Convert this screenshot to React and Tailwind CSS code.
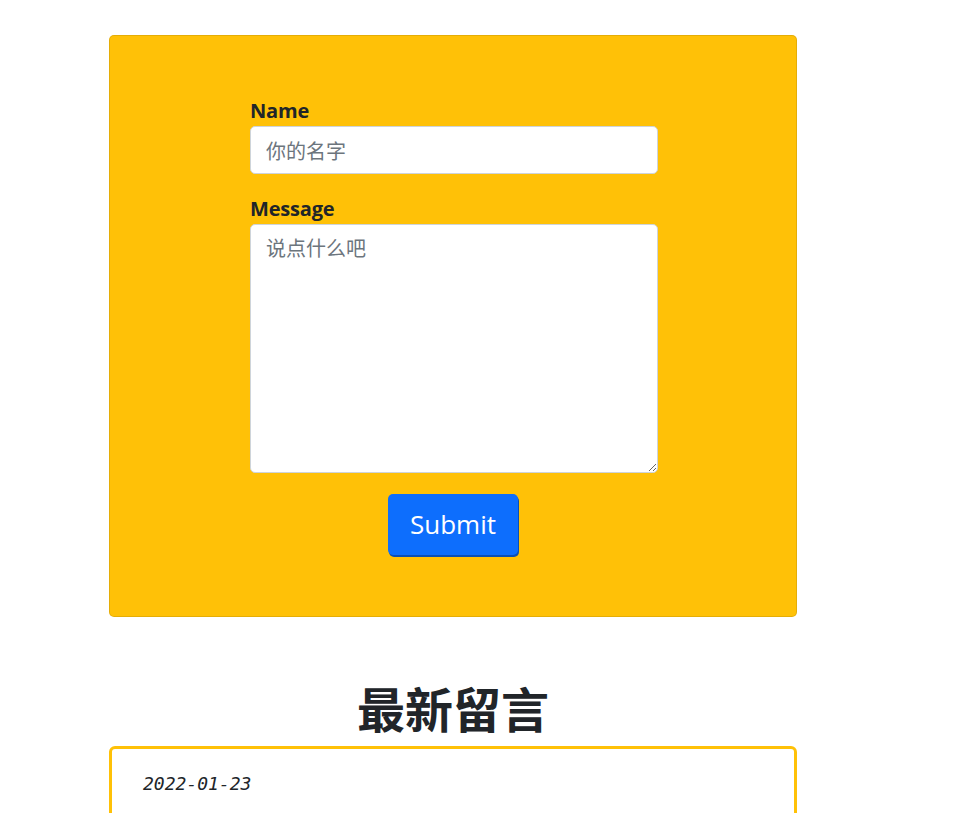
import React from 'react';

const App = () => {
  return (
    <div className="min-h-screen bg-white pt-[35px] pl-[109px] text-[#212529] [font-family:'Noto_Sans','Noto_Sans_CJK_SC',sans-serif]">
      <div className="w-[688px]">
        <div className="h-[582px] bg-[#ffc107] border border-black/10 rounded-[5px] pt-[60px]">
          <form className="w-[408px] ml-[140px] flex flex-col" onSubmit={(e) => e.preventDefault()}>
            <label className="text-[20px] leading-[30px] font-bold [font-family:'Open_Sans','Noto_Sans',sans-serif] tracking-[-0.2px]">
              Name
            </label>
            <input
              type="text"
              placeholder="你的名字"
              className="h-[48px] w-full bg-white border border-[#ced4da] rounded-[5px] px-[15px] text-[20px] placeholder:text-[#6c757d] outline-none [font-family:'Noto_Sans_CJK_SC',sans-serif]"
            />
            <label className="mt-5 text-[20px] leading-[30px] font-bold [font-family:'Open_Sans','Noto_Sans',sans-serif] tracking-[-0.2px]">
              Message
            </label>
            <textarea
              placeholder="说点什么吧"
              className="h-[249px] w-full bg-white border border-[#ced4da] rounded-[5px] px-[15px] py-[8px] text-[20px] leading-[30px] placeholder:text-[#6c757d] outline-none [font-family:'Noto_Sans_CJK_SC',sans-serif]"
            />
            <div className="flex justify-center mt-[21px] pr-[2px]">
              <button
                type="submit"
                className="w-[130px] h-[61px] bg-[#0d6efd] text-white text-[26px] rounded-[5px] shadow-[1px_2px_0_#0a4fb5] [font-family:'Open_Sans','Noto_Sans',sans-serif]"
              >
                Submit
              </button>
            </div>
          </form>
        </div>

        <h2 className="mt-[61px] mb-[10px] text-center text-[48px] leading-[58px] font-bold [font-family:'Noto_Sans_CJK_SC',sans-serif]">
          最新留言
        </h2>

        <div className="h-[200px] border-[3px] border-[#ffc107] rounded-[6px] pt-[23px] pl-[31px]">
          <p className="italic text-[18px] leading-[24px] text-[#212529] [font-family:'DejaVu_Sans_Mono','Liberation_Mono',monospace]">
            2022-01-23
          </p>
        </div>
      </div>
    </div>
  );
};

export default App;
